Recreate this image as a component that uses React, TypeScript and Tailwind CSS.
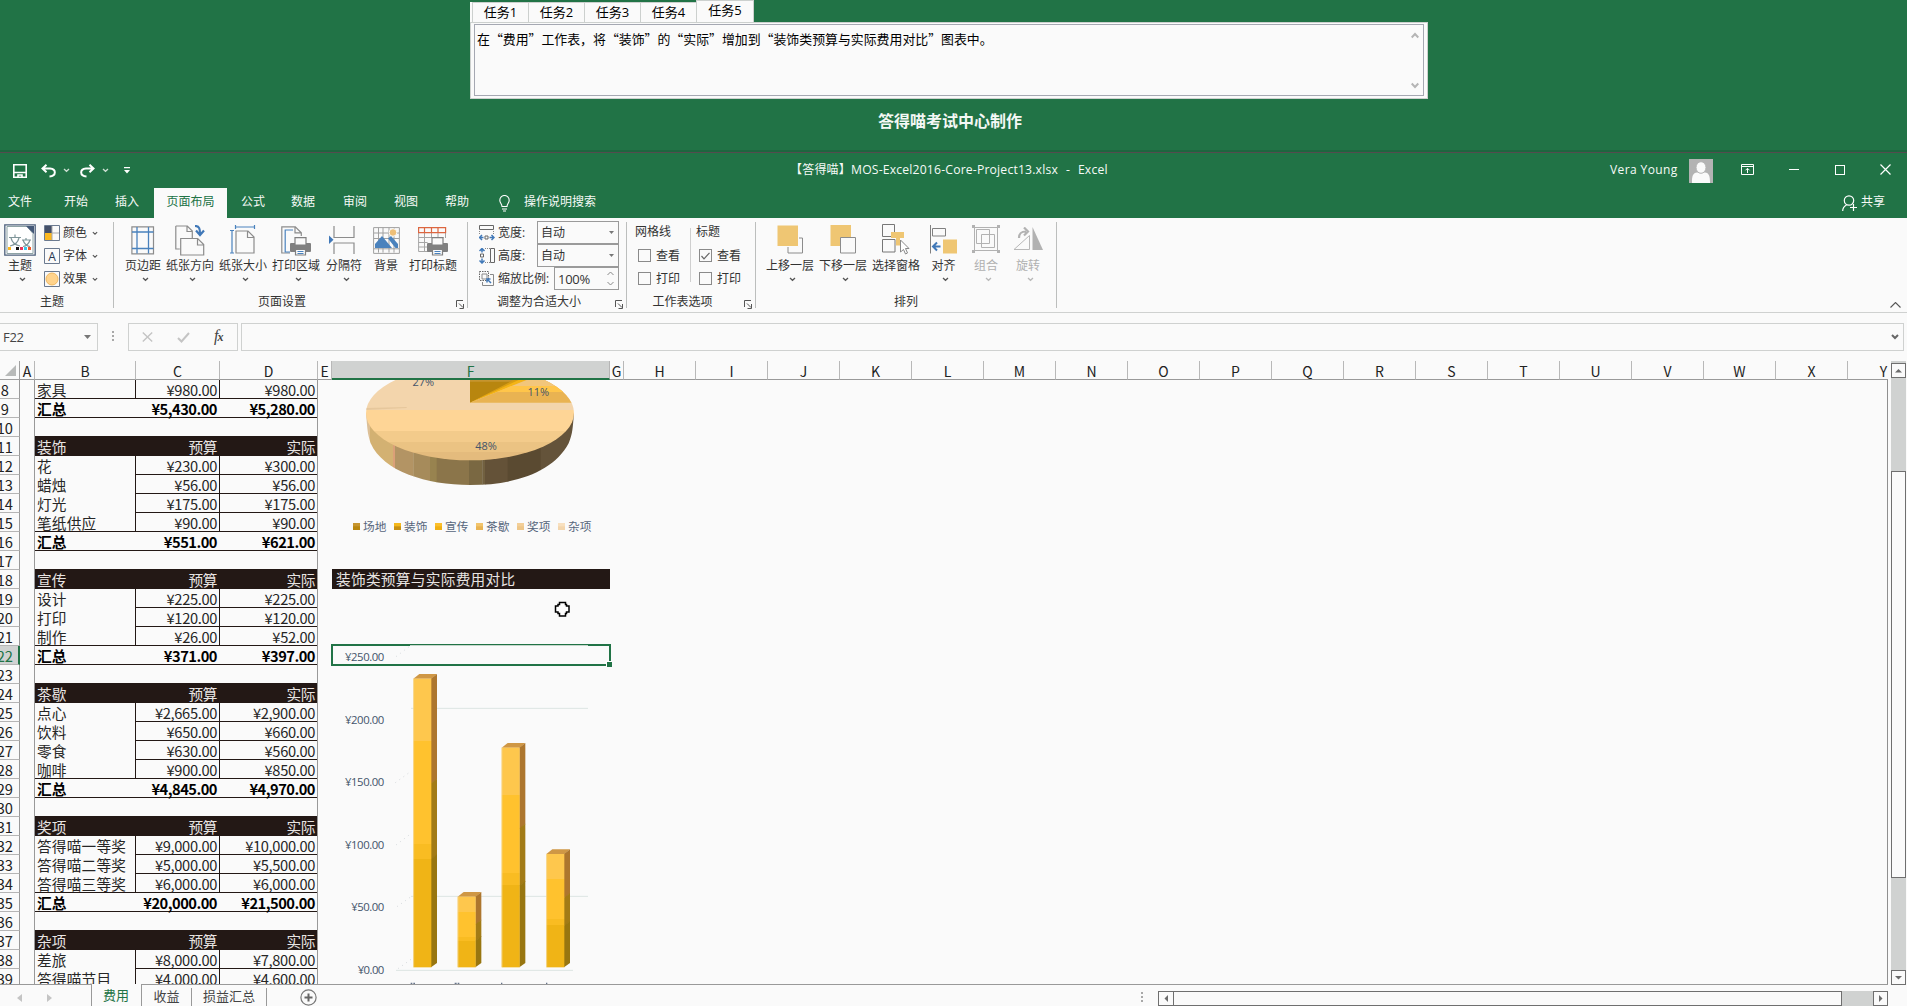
import React from 'react';

type Kind = 'data' | 'last' | 'total' | 'gap' | 'head';
type Row = { n: string; kind: Kind; b?: string; c?: string; d?: string };

const head = (n: string, b: string): Row => ({ n, kind: 'head', b, c: '预算', d: '实际' });
const row = (n: string, b: string, c: string, d: string, kind: Kind = 'data'): Row => ({ n, kind, b, c, d });
const gap = (n: string): Row => ({ n, kind: 'gap' });

const rows: Row[] = [
  row('8', '家具', '¥980.00', '¥980.00', 'last'),
  row('9', '汇总', '¥5,430.00', '¥5,280.00', 'total'),
  gap('10'),
  head('11', '装饰'),
  row('12', '花', '¥230.00', '¥300.00'),
  row('13', '蜡烛', '¥56.00', '¥56.00'),
  row('14', '灯光', '¥175.00', '¥175.00'),
  row('15', '笔纸供应', '¥90.00', '¥90.00', 'last'),
  row('16', '汇总', '¥551.00', '¥621.00', 'total'),
  gap('17'),
  head('18', '宣传'),
  row('19', '设计', '¥225.00', '¥225.00'),
  row('20', '打印', '¥120.00', '¥120.00'),
  row('21', '制作', '¥26.00', '¥52.00', 'last'),
  row('22', '汇总', '¥371.00', '¥397.00', 'total'),
  gap('23'),
  head('24', '茶歇'),
  row('25', '点心', '¥2,665.00', '¥2,900.00'),
  row('26', '饮料', '¥650.00', '¥660.00'),
  row('27', '零食', '¥630.00', '¥560.00'),
  row('28', '咖啡', '¥900.00', '¥850.00', 'last'),
  row('29', '汇总', '¥4,845.00', '¥4,970.00', 'total'),
  gap('30'),
  head('31', '奖项'),
  row('32', '答得喵一等奖', '¥9,000.00', '¥10,000.00'),
  row('33', '答得喵二等奖', '¥5,000.00', '¥5,500.00'),
  row('34', '答得喵三等奖', '¥6,000.00', '¥6,000.00', 'last'),
  row('35', '汇总', '¥20,000.00', '¥21,500.00', 'total'),
  gap('36'),
  head('37', '杂项'),
  row('38', '差旅', '¥8,000.00', '¥7,800.00'),
  row('39', '答得喵节目', '¥4,000.00', '¥4,600.00'),
];

function Chevron({ className = 'text-[#555]', w = 7 }: { className?: string; w?: number }) {
  return (
    <svg width={w} height="5" viewBox="0 0 7 5" className={className} fill="none" stroke="currentColor" strokeWidth="1.3">
      <path d="M1 1l2.5 2.3L6 1" />
    </svg>
  );
}

function Launcher() {
  return (
    <svg width="8" height="9" viewBox="0 0 8 9" fill="none" stroke="#555" strokeWidth="1" className="mb-[3px] shrink-0">
      <path d="M.5 7V.5H7M3 3.5l4 4M7.5 4v4.5H3.5" />
    </svg>
  );
}

function GroupFoot({ label, launcher = false, className = '', labelClass = '' }: { label: string; launcher?: boolean; className?: string; labelClass?: string }) {
  return (
    <div className={`flex h-[20px] items-end ${className}`}>
      <div className={`flex-1 text-center text-[12px] leading-[20px] ${labelClass}`}>{label}</div>
      {launcher && <Launcher />}
    </div>
  );
}

function Big({ label, w, icon, chev = true, off = false, chevPad = 'pl-1' }: { label: string; w: string; icon: React.ReactNode; chev?: boolean; off?: boolean; chevPad?: string }) {
  return (
    <div className={`flex shrink-0 flex-col items-center ${w} ${off ? 'text-[#b0b0b0]' : ''}`}>
      <div className="flex h-[34px] items-start">{icon}</div>
      <div className="h-[18px] whitespace-nowrap text-[12px] leading-[17px]">{label}</div>
      <div className={`flex h-[7px] items-end ${chevPad}`}>{chev && <Chevron className={off ? 'text-[#b8b8b8]' : 'text-[#555]'} />}</div>
    </div>
  );
}

const MarginsIcon = () => (
  <svg width="24" height="30" viewBox="0 0 24 30" fill="none" className="mt-[3px]">
    <path d="M.9.9h21.6v27H.9z" stroke="#8c8c8c" strokeWidth="1.2" />
    <path d="M6 1v26.500M17.500 1v26.500M1 6h21.500M1 22.500h21.500" stroke="#4a82bd" strokeWidth="1.3" />
  </svg>
);
const OrientationIcon = () => (
  <svg width="30" height="32" viewBox="0 0 30 32" fill="none" stroke="#8c8c8c" strokeWidth="1.200" className="mt-[2px]">
    <path d="M.8 1h11.500l5 5v7M.8 1v23h4M12 1v5.500h5.500" />
    <path d="M5.700 13.500h17l6 6V30h-23zM22.500 13.500V20h6" fill="#fafafa" />
    <path d="M20 1c4.500 0 5 3 5 8M21 5.500l4 4.500 4-4.500" stroke="#4078b8" strokeWidth="2.200" />
  </svg>
);
const SizeIcon = () => (
  <svg width="26" height="30" viewBox="0 0 26 30" fill="none" className="mt-[2px]">
    <path d="M5.500 2h19M5.500 0v4M24.500 0v4M2 5.500v22.500M0 5.500h4M0 28h4" stroke="#4a82bd" strokeWidth="1.200" />
    <path d="M6 6h12l6 6v16H6zM17.500 6v6.500H24" stroke="#8c8c8c" strokeWidth="1.200" />
  </svg>
);
const Printer = ({ x, y }: { x: number; y: number }) => (
  <g transform={`translate(${x} ${y})`}>
    <rect x="0" y="6" width="21" height="9" rx="1" fill="#808080" />
    <path d="M5 .6h11V8H5z" fill="#fafafa" stroke="#808080" strokeWidth="1.200" />
    <path d="M5.500 12.500h10V18h-10z" fill="#fafafa" stroke="#808080" strokeWidth="1.200" />
    <path d="M7.500 14.500h6M7.500 16.500h6" stroke="#4a82bd" />
  </g>
);
const PrintAreaIcon = () => (
  <svg width="31" height="31" viewBox="0 0 31 31" fill="none" className="mt-[3px]">
    <path d="M9 27H.8V.8h13.500l6 6V10M14 .8v6h6" stroke="#8c8c8c" strokeWidth="1.200" />
    <path d="M12 4H4.200v22H9" stroke="#4a82bd" strokeWidth="1.200" />
    <Printer x={9} y={11} />
  </svg>
);
const BreaksIcon = () => (
  <svg width="26" height="29" viewBox="0 0 26 29" fill="none" className="mr-[4px] mt-[3px]">
    <path d="M5 0v11.500h20V0M5 28V17h20v11" stroke="#8c8c8c" strokeWidth="1.200" />
    <path d="M0 9.500v8.500l4.500-4.200z" fill="#4078b8" />
  </svg>
);
const BackgroundIcon = () => (
  <svg width="27" height="27" viewBox="0 0 27 27" fill="none" className="mt-[4px]">
    <path d="M.6.6h25.800v25.800H.6zM5.500.6v25M10 .6v25M1 6h25M1 11.500h25M16 .6v25M21 .6v25" stroke="#a0a0a0" />
    <circle cx="20" cy="5.500" r="3.800" fill="#efbf77" stroke="#fafafa" />
    <path d="M2 21v-4l7-8 10 12zM15 11.500l3-2.500 7 8v4h-2.500z" fill="#4a82bd" />
    <path d="M1 21.800h25" stroke="#a0a0a0" />
  </svg>
);
const PrintTitlesIcon = () => (
  <svg width="30" height="30" viewBox="0 0 30 30" fill="none" className="mt-[4px]">
    <path d="M.6 6v18.500H12M.6 10.500h25M.6 15.500h9M.6 20h9M6.500 5v20M13.500 5v6M20 5v6M27.500 5v6" stroke="#a6a6a6" />
    <path d="M.6.6h27v5H.6zM6.500.6v5M13.500.6v5M20 .6v5" stroke="#dc6640" strokeWidth="1.200" />
    <Printer x={9} y={10} />
  </svg>
);
const ForwardIcon = () => (
  <svg width="27" height="29" viewBox="0 0 27 29" className="mt-[2px]">
    <path d="M11 13h14.500v15H11z" fill="#fafafa" stroke="#8c8c8c" />
    <path d="M0 0h21.500v21.500H0z" fill="#efc673" stroke="#fafafa" />
  </svg>
);
const BackwardIcon = () => (
  <svg width="27" height="29" viewBox="0 0 27 29" className="mt-[2px]">
    <path d="M.5 0H21v21H.5z" fill="#efc673" />
    <path d="M10.500 12.500h15v15.500h-15z" fill="#fafafa" stroke="#8c8c8c" />
  </svg>
);
const PaneIcon = () => (
  <svg width="28" height="31" viewBox="0 0 28 31" className="mt-[1px]" fill="none">
    <path d="M9 8.500h13v4H18v9h-4v-9H9z" fill="#efc673" />
    <path d="M.5.500h12v12H.5zM.5 15.500h12.500V28H.5z" fill="#fafafa" stroke="#777" />
    <path d="M9 8h13v6H9z" fill="#efc673" />
    <path d="M18.500 16v12l3-2.500 2 4.500 2-1-2-4.500h3.500z" fill="#fff" stroke="#888" />
  </svg>
);
const AlignIcon = () => (
  <svg width="27" height="29" viewBox="0 0 27 29" className="mt-[2px]" fill="none">
    <path d="M.5 0v28.500M2.500 3.500h13V11h-13z" stroke="#808080" />
    <path d="M13 14.500h14v14H13z" fill="#efc673" />
    <path d="M10.500 21.500H4M7 17.500l-4 4 4 4" stroke="#4078b8" strokeWidth="2" />
  </svg>
);
const GroupIcon = () => (
  <svg width="28" height="29" viewBox="0 0 28 29" className="mt-[2px]" fill="none" stroke="#b2b2b2">
    <path d="M2.500 2.500h23v23h-23zM4.500 4.500h13v14h-13zM9.500 9.500h13v13h-13z" />
    <path d="M0 0h3v3H0zM25 0h3v3h-3zM0 25h3v3H0zM25 25h3v3h-3z" fill="#b2b2b2" stroke="none" />
  </svg>
);
const RotateIcon = () => (
  <svg width="30" height="26" viewBox="0 0 30 26" className="mt-[4px]" fill="none">
    <path d="M1 22.500h15.500V8.500z" stroke="#b8b8b8" />
    <path d="M19.500 0v23H30z" fill="#b2b2b2" />
    <path d="M6 11c0-5 2-6.500 7-6.500M11 .5l4 4-4 4" stroke="#b2b2b2" strokeWidth="2.200" />
  </svg>
);

function TaskPanel() {
  return (
    <div className="flex h-[150px] flex-col items-start pl-[470px]">
      <div className="flex h-[22px] items-end text-[13px] text-black">
        <div className="h-[20px] w-[2px] bg-[#fafafa]" />
        {['任务1', '任务2', '任务3', '任务4'].map((t) => (
          <div key={t} className="h-[20px] w-[56px] border-l border-t border-[#ccd0ce] bg-[#fafafa] text-center leading-[18px]">{t}</div>
        ))}
        <div className="h-[22px] w-[58px] border-x border-t border-[#ccd0ce] bg-[#fafafa] text-center leading-[19px]">任务5</div>
      </div>
      <div className="h-[77px] w-[958px] border border-[#ccd0ce] bg-[#fafafa] px-[3px] pb-[2px] pt-px">
        <div className="flex h-full justify-between border border-[#a5a8b2] pl-[2px] pr-[4px]">
          <div className="whitespace-nowrap pt-[4px] font-['Noto_Sans_CJK_SC',sans-serif] text-[12.900px] leading-[20px] text-black" lang="zh-CN">在“费用”工作表，将“装饰”的“实际”增加到“装饰类预算与实际费用对比”图表中。</div>
          <div className="flex flex-col justify-between pb-[6px] pt-[7px]">
            <svg width="8" height="7" viewBox="0 0 8 7" fill="none" stroke="#b5b5b5" strokeWidth="2"><path d="M.7 5.500L4 2l3.300 3.500" /></svg>
            <svg width="8" height="7" viewBox="0 0 8 7" fill="none" stroke="#b5b5b5" strokeWidth="2"><path d="M.7 1.500L4 5l3.300-3.500" /></svg>
          </div>
        </div>
      </div>
      <div className="ml-[408px] mt-[12px] text-[16px] font-bold leading-[20px] text-[#f4f8f5]">答得喵考试中心制作</div>
    </div>
  );
}

function TitleBar() {
  return (
    <div className="flex h-[35px] shrink-0 items-center text-[12px] text-[#f6faf7]">
      <div className="flex w-[797px] items-center">
        <svg width="14" height="14" viewBox="0 0 14 14" fill="none" stroke="#fff" strokeWidth="1.600" className="ml-[13px]"><path d="M.8.8h12.400v12.400H.8z" /><path d="M1 8.500h12M5 13v-2h4v2" /></svg>
        <svg width="15" height="14" viewBox="0 0 15 14" fill="none" stroke="#fff" strokeWidth="2" className="ml-[14px]"><path d="M5.500.8L1.500 4.500l4 3.700M2 4.500h7c6.500.500 6.500 7.500-.5 8" /></svg>
        <Chevron className="ml-[7px] text-[#cfe0d5]" />
        <svg width="15" height="14" viewBox="0 0 15 14" fill="none" stroke="#fff" strokeWidth="2" className="ml-[10px]"><path d="M9.500.8l4 3.700-4 3.700M13 4.500H6c-6.500.500-6.500 7.500.5 8" /></svg>
        <Chevron className="ml-[7px] text-[#cfe0d5]" />
        <svg width="6" height="7" viewBox="0 0 6 7" className="ml-[15px]"><path d="M0 0h6v1.200H0zM0 3h6L3 6.500z" fill="#fff" /></svg>
      </div>
      <div className="flex w-[813px] whitespace-nowrap pb-[2px] leading-[18px]">
        <span className="-ml-[7px] w-[61px] tracking-[0.200px]">【答得喵】</span>
        <span className="text-[12.200px] tracking-[0.180px]">MOS-Excel2016-Core-Project13.xlsx</span>
        <span className="ml-[8px] text-[12.200px]">-</span>
        <span className="ml-[8px] text-[12.200px] tracking-[0.180px]">Excel</span>
      </div>
      <div className="w-[79px] whitespace-nowrap pb-[2px] text-[12px] tracking-[0.400px]">Vera Young</div>
      <svg width="24" height="24" viewBox="0 0 24 24"><path d="M0 0h24v24H0z" fill="#b3b3b3" /><path d="M3 24c-.3-7 1-10 5-10.500h8c4 .5 5 3.500 5 10.500z" fill="#fafafa" /><ellipse cx="12" cy="8.500" rx="5" ry="5.800" fill="#fafafa" stroke="#b3b3b3" /></svg>
      <svg width="13" height="11" viewBox="0 0 13 11" fill="none" stroke="#fff" className="mb-[2px] ml-[28px]"><path d="M.5.500h12v10H.5zM.5 2.500h12M6.500 9V4.500M4.500 6.300l2-2 2 2" /></svg>
      <div className="mb-[3px] ml-[35px] h-px w-[10px] bg-white" />
      <div className="mb-[2px] ml-[36px] h-[10px] w-[10px] border border-white" />
      <svg width="11" height="11" viewBox="0 0 11 11" fill="none" stroke="#fff" strokeWidth="1.200" className="mb-[2px] ml-[35px]"><path d="M.5.500l10 10M10.500.500l-10 10" /></svg>
    </div>
  );
}

function Tabs() {
  return (
    <div className="flex h-[30px] shrink-0 items-stretch text-[12px] leading-[28px] text-[#f6faf7]">
      <div className="w-[64px] pl-[8px]">文件</div>
      <div className="w-[51px]">开始</div>
      <div className="w-[39px]">插入</div>
      <div className="w-[73px] bg-[#fafafa] text-center text-[#217346]">页面布局</div>
      <div className="w-[64px] pl-[14px]">公式</div>
      <div className="w-[52px]">数据</div>
      <div className="w-[51px]">审阅</div>
      <div className="w-[51px]">视图</div>
      <div className="w-[54px]">帮助</div>
      <svg width="11" height="17" viewBox="0 0 11 17" fill="none" stroke="#fff" strokeWidth="1.100" className="mt-[7px]"><path d="M3 11.500C3 9 .8 8 .8 5.200a4.700 4.700 0 019.400 0C10.200 8 8 9 8 11.500zM3 14h5M4 16h3" /></svg>
      <div className="ml-[14px] flex-1">操作说明搜索</div>
      <svg width="15" height="16" viewBox="0 0 15 16" fill="none" stroke="#fff" strokeWidth="1.200" className="mr-[4px] mt-[7px]"><circle cx="7" cy="5.500" r="4.700" /><path d="M.7 16c0-3 1-4.500 3.800-6M11.500 9v7M8 12.500h7" /></svg>
      <div className="w-[46px]">共享</div>
    </div>
  );
}

const Check = ({ on = false, label }: { on?: boolean; label: string }) => (
  <div className="flex h-[23px] items-center">
    <div className="flex h-[13px] w-[13px] items-center justify-center border border-[#8a8a8a]">
      {on && <svg width="9" height="8" viewBox="0 0 9 8" fill="none" stroke="#666" strokeWidth="1.200"><path d="M.5 4l2.500 2.800L8.500.800" /></svg>}
    </div>
    <div className="ml-[5px]">{label}</div>
  </div>
);

const Combo = ({ icon, label, value }: { icon: React.ReactNode; label: string; value: string }) => (
  <div className="flex h-[23px] items-center">
    {icon}
    <div className="ml-[3px] w-[39px] whitespace-nowrap">{label}</div>
    <div className="flex h-[23px] w-[82px] items-center justify-between border border-[#9a9a9a] pl-[3px] pr-[4px]">
      {value}
      <svg width="5" height="3" viewBox="0 0 5 3"><path d="M0 0h5L2.500 3z" fill="#777" /></svg>
    </div>
  </div>
);

const Sep = () => <div className="mt-[4px] h-[86px] w-px shrink-0 bg-[#bcbebd]" />;

function Ribbon() {
  return (
    <div className="flex h-[95px] shrink-0 border-b border-[#cfd1d0] bg-[#fafafa] text-[12px] text-[#333]">
      <div className="flex w-[113px] flex-col pt-[5px]">
        <div className="flex h-[69px]">
          <div className="flex w-[40px] flex-col items-center">
            <svg width="32" height="32" viewBox="0 0 32 32" fill="none" className="mt-px">
              <path d="M.8.800h30.400v30.400H.8z" stroke="#4d607c" strokeWidth="1.300" />
              <path d="M3 2.500h20l6 7v20H3z" fill="#fff" stroke="#8ea3a5" />
              <path d="M22 2h8v8z" fill="#445878" />
              <path d="M5 13.500h12M11 10.500v3M7 14c1 4 4 7 9 8M15 14c-1 4-4 7-9 8M18 16h9M22 14v2M19 16c1 3 4 6 7 6.500M26 16c-1 3-4 6-7 6.500" stroke="#7f9599" strokeWidth="1.200" />
              <path d="M4 23h3v3H4z" fill="#fbb821" /><path d="M12 23h3v3h-3z" fill="#111" /><path d="M16 23h3v3h-3z" fill="#e8365e" /><path d="M20 23h3v3h-3z" fill="#39c7e8" /><path d="M24 23h3v3h-3z" fill="#f2592a" />
            </svg>
            <div className="mt-[1px] h-[18px] leading-[17px]">主题</div>
            <div className="flex h-[7px] items-end pl-[4px]"><Chevron /></div>
          </div>
          <div className="ml-[4px] flex flex-col">
            {['颜色', '字体', '效果'].map((t, i) => (
              <div key={t} className="flex h-[23px] items-center pb-[5px]">
                <svg width="16" height="16" viewBox="0 0 16 16" className="mt-[2px]" fill="none">
                  <path d="M.5.500h15v15H.5z" stroke="#6b7a90" />
                  {i === 0 && <><path d="M1 1h7v7H1z" fill="#445069" /><path d="M1 8h7v7H1z" fill="#fbb821" /><path d="M8 1v14M8 8h7" stroke="#aaa" /></>}
                  {i === 1 && <text x="8" y="12.500" textAnchor="middle" fontSize="12" fill="#26364f" className="font-['Open_Sans']">A</text>}
                  {i === 2 && <circle cx="8" cy="8" r="6" fill="#ffd38c" stroke="#f0b860" />}
                </svg>
                <div className="ml-[3px] mt-[2px] w-[29px] leading-[18px]">{t}</div>
                <Chevron className="mt-[2px] w-[6px] text-[#555]" />
              </div>
            ))}
          </div>
        </div>
        <GroupFoot label="主题" className="pr-[9px]" />
      </div>
      <Sep />
      <div className="flex w-[353px] flex-col pt-[5px]">
        <div className="flex h-[69px] pl-[8px]">
          <Big label="页边距" w="w-[42px]" icon={<MarginsIcon />} />
          <Big label="纸张方向" w="w-[52px]" icon={<OrientationIcon />} />
          <Big label="纸张大小" w="w-[54px]" icon={<SizeIcon />} />
          <Big label="打印区域" w="w-[52px]" icon={<PrintAreaIcon />} />
          <Big label="分隔符" w="w-[44px]" icon={<BreaksIcon />} />
          <Big label="背景" w="w-[40px]" icon={<BackgroundIcon />} chev={false} />
          <Big label="打印标题" w="w-[54px]" icon={<PrintTitlesIcon />} chev={false} />
        </div>
        <GroupFoot label="页面设置" launcher className="pr-[3px]" labelClass="pr-[6px]" />
      </div>
      <Sep />
      <div className="flex w-[158px] flex-col pt-[3px]">
        <div className="h-[71px] pl-[11px] leading-[18px]">
          <Combo label="宽度:" value="自动" icon={<svg width="16" height="16" viewBox="0 0 16 16" fill="none"><path d="M.5.500h14v4H.5z" stroke="#666" /><path d="M.5 6v3M14.500 6v3" stroke="#888" strokeDasharray="1 1" /><path d="M6 11h3v3H6z" stroke="#666" /><path d="M4.500 12.500h-4M3 10l-2.500 2.500L3 15M10.500 12.500h4M12.500 10l2.500 2.500-2.500 2.500" stroke="#4078b8" strokeWidth="1.500" /></svg>} />
          <Combo label="高度:" value="自动" icon={<svg width="16" height="16" viewBox="0 0 16 16" fill="none"><path d="M11.500.500h4v14h-4z" stroke="#666" /><path d="M6 .5h5M6 14.500h5" stroke="#888" strokeDasharray="1 1" /><path d="M1.500 6h3v3h-3z" stroke="#666" /><path d="M3 4.500v-4M.5 3L3 .5 5.500 3M3 10.500v4M.5 12.500L3 15l2.500-2.500" stroke="#4078b8" strokeWidth="1.500" /></svg>} />
          <div className="flex h-[23px] items-center">
            <svg width="16" height="16" viewBox="0 0 16 16" fill="none"><path d="M.5.500h9v9h-9z" stroke="#666" strokeDasharray="1.500 1" /><path d="M3 3h5v5H3zM11 3.500h3.500v11h-11V11" stroke="#888" /><path d="M12 12L8 8M8 11.500V8h3.500" stroke="#4078b8" strokeWidth="1.500" /></svg>
            <div className="ml-[3px] w-[56px] whitespace-nowrap">缩放比例:</div>
            <div className="flex h-[23px] w-[65px] items-center justify-between border border-[#9a9a9a] pl-[3px] pr-[4px]">
              <span className="text-[13px] tracking-[-0.300px]">100%</span>
              <svg width="7" height="15" viewBox="0 0 7 15" fill="none" stroke="#888"><path d="M.5 4l3-3 3 3M.5 11l3 3 3-3" /></svg>
            </div>
          </div>
        </div>
        <GroupFoot label="调整为合适大小" launcher className="pr-[3px]" labelClass="pr-[5px]" />
      </div>
      <Sep />
      <div className="flex w-[128px] flex-col pt-[3px]">
        <div className="flex h-[71px] leading-[18px]">
          <div className="w-[63px] pl-[8px]"><div className="h-[23px] leading-[22px]">网格线</div><div className="pl-[3px]"><Check label="查看" /><Check label="打印" /></div></div>
          <div className="mt-[7px] h-[54px] w-px bg-[#cfcfcf]" />
          <div className="pl-[5px]"><div className="h-[23px] leading-[22px]">标题</div><div className="pl-[3px]"><Check on label="查看" /><Check label="打印" /></div></div>
        </div>
        <GroupFoot label="工作表选项" launcher className="pr-[3px]" labelClass="pr-[6px]" />
      </div>
      <Sep />
      <div className="flex w-[300px] flex-col pt-[5px]">
        <div className="flex h-[69px] pl-[8px]">
          <Big label="上移一层" w="w-[52px]" icon={<ForwardIcon />} />
          <Big label="下移一层" w="w-[54px]" icon={<BackwardIcon />} />
          <Big label="选择窗格" w="w-[52px]" icon={<PaneIcon />} chev={false} />
          <Big label="对齐" w="w-[43px]" icon={<AlignIcon />} />
          <Big label="组合" w="w-[42px]" icon={<GroupIcon />} off />
          <Big label="旋转" w="w-[42px]" icon={<RotateIcon />} off />
        </div>
        <GroupFoot label="排列" />
      </div>
      <Sep />
      <div className="flex flex-1 items-end justify-end pb-[4px] pr-[6px]">
        <svg width="11" height="6" viewBox="0 0 11 6" fill="none" stroke="#555" strokeWidth="1.100"><path d="M.5 5.500l5-5 5 5" /></svg>
      </div>
    </div>
  );
}

function FormulaBar() {
  return (
    <div className="flex h-[48px] shrink-0 items-start pt-[10px]">
      <div className="flex h-[28px] w-[98px] items-center justify-between border border-l-0 border-[#cfd1d0] pl-[3px] pr-[6px] text-[13px] text-[#444]">
        <span className="pt-px tracking-[-0.300px]">F22</span><svg width="7" height="4" viewBox="0 0 7 4"><path d="M0 0h7L3.500 4z" fill="#777" /></svg>
      </div>
      <svg width="3" height="12" viewBox="0 0 3 12" className="ml-[14px] mt-[8px]"><path d="M0 0h2v2H0zM0 4h2v2H0zM0 8h2v2H0z" fill="#a8a8a8" /></svg>
      <div className="ml-[13px] flex h-[28px] w-[110px] items-center border border-[#cfd1d0]">
        <svg width="11" height="10" viewBox="0 0 11 10" fill="none" stroke="#c4c4c4" strokeWidth="1.400" className="ml-[13px]"><path d="M.8.500l9.400 9M10.200.500l-9.400 9" /></svg>
        <svg width="13" height="11" viewBox="0 0 13 11" fill="none" stroke="#c4c4c4" strokeWidth="2" className="ml-[24px]"><path d="M1 6l3.500 3.500L12 1" /></svg>
        <div className="ml-[24px] pb-[2px] font-['Liberation_Serif'] text-[16px] italic leading-[20px] text-[#444]">f<span className="-ml-[1px] text-[12px] font-bold">x</span></div>
      </div>
      <div className="ml-[3px] flex h-[28px] w-[1663px] items-center justify-end border border-[#cfd1d0] pr-[4px]">
        <svg width="8" height="6" viewBox="0 0 8 6" fill="none" stroke="#666" strokeWidth="2"><path d="M1 1l3 3 3-3" /></svg>
      </div>
    </div>
  );
}

const columns: [string, string][] = [['A', 'w-[15px]'], ['B', 'w-[101px]'], ['C', 'w-[84px]'], ['D', 'w-[98px]'], ['E', 'w-[14px]'], ['F', 'w-[278px]'], ['G', 'w-[14px]']];

function ColumnHeads() {
  return (
    <div className="flex h-[19px] w-[1888px] shrink-0 overflow-hidden text-[14px] leading-[18px] text-[#222]">
      <div className="flex w-[20px] shrink-0 items-end justify-end border-b border-r border-[#a0a0a0] pb-[3px] pr-[3px]">
        <svg width="11" height="11" viewBox="0 0 11 11"><path d="M11 0v11H0z" fill="#b8bab9" /></svg>
      </div>
      {columns.map(([c, w]) => (
        <div key={c} className={`${w} flex shrink-0 justify-center border-r pt-px ${c === 'F' ? 'border-b-2 border-b-[#217346] border-r-[#b5b5b5] bg-[#d0d2d1] text-[#217346]' : 'border-b border-b-[#999] border-r-[#b8b8b8]'}`}>{c}</div>
      ))}
      {'HIJKLMNOPQRSTUVWXY'.split('').map((c) => (
        <div key={c} className="w-[72px] shrink-0 border-b border-r border-b-[#999] border-r-[#b8b8b8] pt-px text-center">{c}</div>
      ))}
    </div>
  );
}

const line = 'border-[#231815]';

function Table() {
  return (
    <div className="flex w-[318px] shrink-0 flex-col">
      {rows.map((r) => {
        const data = r.kind === 'data' || r.kind === 'last';
        const skin = r.kind === 'head' ? 'bg-[#231815] text-[#e8e4e2]' : r.kind === 'total' ? 'font-bold text-black' : 'text-[#262626]';
        const track = r.kind === 'total' ? 'tracking-[-0.500px]' : 'tracking-[-0.350px]';
        return (
          <div key={r.n} className="flex h-[19px] shrink-0 text-[14.670px] leading-[20px]">
            <div className={`flex w-[20px] shrink-0 justify-end border-b border-b-[#b5b5b5] ${r.n === '22' ? 'border-r-2 border-r-[#217346] bg-[#d0d2d1] pr-[5px] text-[#217346]' : `border-r border-r-[#999] text-[#222] ${r.n.length === 1 ? 'pr-[10px]' : 'pr-[6px]'}`}`}>{r.n}</div>
            <div className="w-[15px] shrink-0 border-r border-[#999]" />
            <div className={`flex ${skin}`}>
              <div className={`w-[101px] whitespace-nowrap pl-[2px] tracking-[0.200px] ${line} ${data ? 'border-r' : ''} ${r.kind !== 'data' ? 'border-b' : ''}`}>{r.b}</div>
              <div className={`w-[84px] border-b text-right ${track} ${line} ${data ? 'border-r pr-[2px]' : 'pr-[3px]'}`}>{r.c}</div>
              <div className={`w-[97px] border-b pr-[2px] text-right ${track} ${line}`}>{r.d}</div>
            </div>
            <div className="w-px bg-[#999]" />
          </div>
        );
      })}
    </div>
  );
}

const sideBands: [number, number, string][] = [[136, 150, '#dcbf96'], [150, 219, '#d3b172'], [219, 225, '#dba078'], [225, 280, '#b39464'], [280, 330, '#a68b5b'], [330, 350, '#98834f'], [350, 447, '#8b754a'], [447, 487, '#7a6842'], [487, 495, '#716040'], [495, 563, '#645238'], [563, 662, '#5a4a31'], [662, 764, '#64533a']];
const legend: [string, string, string][] = [['场地', '#c6952f', '#b8860f'], ['装饰', '#f5b81c', '#c89012'], ['宣传', '#fcbf2b', '#f0b014'], ['茶歇', '#f2c46c', '#e9b352'], ['奖项', '#f3cf98', '#eec688'], ['杂项', '#f8e0bf', '#f3d5ac']];

function PieChart() {
  return (
    <svg width="278" height="189" viewBox="36 90 834 567" className="font-['Open_Sans','Noto_Sans_CJK_SC',sans-serif]">
      <defs>
        <clipPath id="face"><ellipse cx="450" cy="189" rx="312" ry="142" /></clipPath>
        <clipPath id="side"><path d="M138 189C142 235 142 250 152 280C190 365 320 405 450 405C590 405 700 365 746 280C758 250 758 235 762 189z" /></clipPath>
      </defs>
      <g clipPath="url(#side)">{sideBands.map(([a, b, c]) => <rect key={a} x={a} y="180" width={b - a + 1} height="230" fill={c} />)}</g>
      <g clipPath="url(#face)">
        <path d="M130 40h640v141H130z" fill="#f3d5ac" />
        <path d="M130 180h640v64H130z" fill="#fed596" />
        <path d="M130 243h640v34H130z" fill="#f3cb8b" />
        <path d="M130 276h640v31H130z" fill="#ebc383" />
        <path d="M130 306h640v31H130z" fill="#e4bb7d" />
        <path d="M138 174l122-3v3l-122 6z" fill="#e6c79c" />
        <path d="M450 158L450 80H620z" fill="#b8860f" />
        <path d="M450 90h140l-8 5H450z" fill="#c6952f" />
        <path d="M450 158L590 88l40 0z" fill="#f5b415" />
        <path d="M450 158L575 100L600 88 585 88z" fill="#d99e12" />
        <path d="M450 158L630 86H770v72z" fill="#e9b352" />
        <path d="M530 126L573 108H770v18z" fill="#ffc54a" />
        <path d="M575 108L630 86H770v22z" fill="#f2c67b" />
      </g>
      <g fontSize="33" fill="#44546a" textAnchor="middle"><text x="310" y="107">27%</text><text x="655" y="138">11%</text><text x="498" y="300">48%</text></g>
      {legend.map(([t, a, b], i) => (
        <g key={t}>
          <rect x={99 + i * 123} y="519" width="21" height="12" fill={a} />
          <rect x={99 + i * 123} y="529" width="21" height="11" fill={b} />
          <text x={129 + i * 123} y="543" fontSize="35" fill="#56657b">{t}</text>
        </g>
      ))}
    </svg>
  );
}

const bars = [
  { x: 280, top: 206, s: [393, 702, 747], side: [515, 740] },
  { x: 413, top: 860, s: [906, 981, 993], side: [938, 985] },
  { x: 545, top: 413, s: [555, 789, 825], side: [650, 820] },
  { x: 679, top: 732, s: [807, 927, 945], side: [858, 940] },
];

function BarChart() {
  return (
    <svg width="278" height="395" viewBox="36 -63 834 1185" className="overflow-hidden font-['Open_Sans','Noto_Sans_CJK_SC',sans-serif]">
      <path d="M270 106H805M273 295H804M273 859H804M228 1081H759" stroke="#dde5e3" strokeWidth="3" fill="none" />
      <path d="M228 140L270 108M226 518L270 486M228 705L270 673M231 890L273 860M234 1076L273 1048" stroke="#d5d9dc" strokeWidth="3" strokeDasharray="3 12" fill="none" />
      {[250, 200, 150, 100, 50, 0].map((v, i) => (
        <text key={v} x="193" y={153 + i * 187.800} textAnchor="end" fontSize="34" textLength={v >= 100 ? 118 : v ? 99 : 80} fill="#44546a">{`¥${v}.00`}</text>
      ))}
      {bars.map(({ x, top, s, side }) => (
        <g key={x}>
          <path d={`M${x} ${top}l18-14h53l-17 14z`} fill="#cf9745" />
          <path d={`M${x + 53} ${top}l18-14V${side[0] - 7}l-18 14z`} fill="#ad762e" />
          <path d={`M${x + 53} ${side[0] + 5}l18-14V${side[1] - 5}l-18 14z`} fill="#a27b16" />
          <path d={`M${x + 53} ${side[1] + 7}l18-14V1059l-18 13z`} fill="#987610" />
          <rect x={x} y={top} width="54" height={s[0] - top} fill="#fec74d" />
          <rect x={x} y={s[0]} width="54" height={s[1] - s[0]} fill="#ffc22e" />
          <rect x={x} y={s[1]} width="54" height={s[2] - s[1]} fill="#f9bc22" />
          <rect x={x} y={s[2]} width="54" height={1072 - s[2]} fill="#f0b416" />
          <path d={`M${x + 1} ${top}V1071`} stroke="#f5d896" strokeWidth="2" />
        </g>
      ))}
      <path d="M272 1120h5M280 1120h5M404 1120h6M413 1120h5M543 1120h4M678 1120h4" stroke="#66748a" strokeWidth="4" />
    </svg>
  );
}

function ChartColumn() {
  return (
    <div className="relative ml-[14px] flex w-[278px] shrink-0 flex-col">
      <PieChart />
      <div className="h-[20px] shrink-0 bg-[#231815] pl-[4px] text-[14.670px] leading-[20px] tracking-[0.300px] text-[#e8e4e2]">装饰类预算与实际费用对比</div>
      <div className="h-[395px] shrink-0"><BarChart /></div>
      <div className="absolute -left-[1px] top-[264px] h-[22px] w-[280px] border-2 border-[#217346]">
        <div className="absolute -top-[1px] left-[77px] h-px w-[178px] bg-[#c4d6cb]" />
        <div className="absolute -bottom-[3px] -right-[3px] h-[6px] w-[6px] border-l border-t border-white bg-[#217346]" />
      </div>
      <svg width="17" height="17" viewBox="0 0 17 17" className="absolute left-[222px] top-[221px]"><path d="M5.500 1.500h6v2h1v1.500h2.500v6h-2.500v1.500h-1v2.500h-6v-2.500h-1.500v-1.500H1.500v-6h2.500V3.500h1.500z" fill="#fff" stroke="#000" strokeWidth="1.500" /></svg>
    </div>
  );
}

function Arrow({ d }: { d: string }) {
  return <svg width="7" height="7" viewBox="0 0 7 7"><path d={d} fill="#6b6b6b" /></svg>;
}

function SheetBar() {
  return (
    <div className="flex h-[22px] shrink-0 text-[13px] leading-[22px] text-[#444]">
      <div className="flex w-[91px] items-center border-t border-[#999] pl-[17px] pt-[4px]">
        <svg width="5" height="8" viewBox="0 0 5 8"><path d="M5 0v8L0 4z" fill="#c4c4c4" /></svg>
        <svg width="5" height="8" viewBox="0 0 5 8" className="ml-[25px]"><path d="M0 0v8l5-4z" fill="#c4c4c4" /></svg>
      </div>
      <div className="w-[51px] border-x border-[#999] pr-[1px] text-center text-[#217346]">费用</div>
      <div className="flex h-full flex-1 border-t border-[#999]">
        <div className="mt-[3px] h-[18px] w-[50px] border-r border-[#999] text-center leading-[17px]">收益</div>
        <div className="mt-[3px] h-[18px] w-[75px] border-r border-[#999] text-center leading-[17px]">损益汇总</div>
        <svg width="17" height="17" viewBox="0 0 17 17" fill="none" stroke="#777" className="ml-[33px] mt-[4px]"><circle cx="8.500" cy="8.500" r="7.600" strokeWidth="1.200" /><path d="M8.500 4.500v8M4.500 8.500h8" strokeWidth="2" stroke="#666" /></svg>
      </div>
      <div className="flex w-[1540px] items-end">
        <div className="flex h-full w-[1521px] items-end justify-end border-t border-[#999]">
          <svg width="2" height="11" viewBox="0 0 2 11" className="mb-[3px] mr-[15px]"><path d="M0 0h2v2H0zM0 4h2v2H0zM0 8h2v2H0z" fill="#a8a8a8" /></svg>
          <div className="flex h-[15px] w-[730px] bg-[#d0d2d1]">
            <div className="flex w-[16px] items-center justify-center border border-[#6f6f6f] bg-[#fafafa]"><Arrow d="M5 0v7L1.500 3.500z" /></div>
            <div className="-ml-px w-[669px] border border-[#6f6f6f] bg-[#fafafa]" />
            <div className="ml-auto flex w-[15px] items-center justify-center border border-[#6f6f6f] bg-[#fafafa]"><Arrow d="M2 0v7l3.500-3.500z" /></div>
          </div>
        </div>
      </div>
    </div>
  );
}

export default function App() {
  return (
    <div lang="zh-CN" className="flex h-[1006px] w-[1907px] flex-col overflow-hidden bg-[#fafafa] font-['Open_Sans','Noto_Sans_CJK_SC',sans-serif]">
      <div className="shrink-0 bg-[#217346]">
        <TaskPanel />
        <div className="h-[2px] bg-[#1e663f]" />
        <div className="h-px bg-[#544c4e]" />
        <TitleBar />
        <Tabs />
      </div>
      <Ribbon />
      <FormulaBar />
      <div className="flex h-[623px] shrink-0">
        <div className="flex w-[1888px] flex-col font-['Noto_Sans_CJK_SC',sans-serif]">
          <ColumnHeads />
          <div className="flex h-[604px] overflow-hidden border-r border-[#8f8f8f]">
            <Table />
            <ChartColumn />
          </div>
        </div>
        <div className="-mb-px ml-[3px] flex w-[15px] flex-col bg-[#d0d2d1]">
          <div className="mt-[2px] flex h-[15px] items-center justify-center border border-[#6f6f6f] bg-[#fafafa]"><Arrow d="M0 5.500h7L3.500 2z" /></div>
          <div className="mt-[93px] h-[407px] border border-[#6f6f6f] bg-[#fafafa]" />
          <div className="mt-auto flex h-[15px] items-center justify-center border border-[#6f6f6f] bg-[#fafafa]"><Arrow d="M0 2h7L3.500 5.500z" /></div>
        </div>
      </div>
      <SheetBar />
    </div>
  );
}
